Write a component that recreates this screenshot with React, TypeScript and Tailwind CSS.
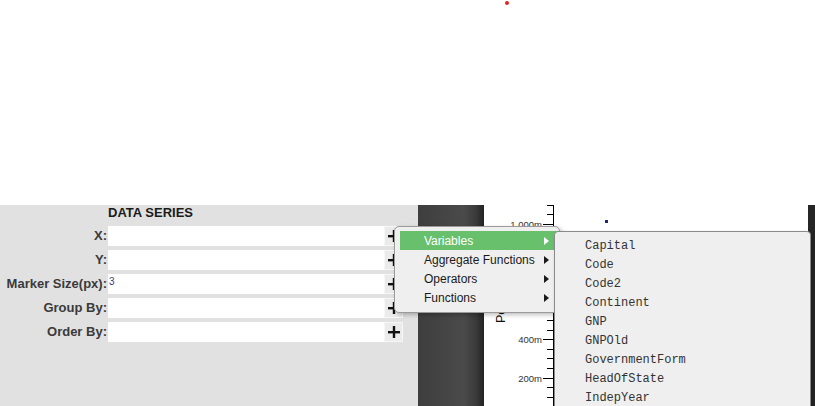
import React from "react";

const rows = [
  { label: "X:", value: "" },
  { label: "Y:", value: "" },
  { label: "Marker Size(px):", value: "3" },
  { label: "Group By:", value: "" },
  { label: "Order By:", value: "" },
];

const menuItems = ["Variables", "Aggregate Functions", "Operators", "Functions"];
const subItems = [
  "Capital",
  "Code",
  "Code2",
  "Continent",
  "GNP",
  "GNPOld",
  "GovernmentForm",
  "HeadOfState",
  "IndepYear",
];

function PlusIcon() {
  return (
    <svg width="12" height="12" viewBox="0 0 12 12">
      <rect x="0" y="5" width="12" height="2.4" fill="#111" />
      <rect x="4.8" y="0" width="2.4" height="12" fill="#111" />
    </svg>
  );
}

function Chart() {
  const ticks: { y: number; major: boolean; label?: string }[] = [];
  const labels: Record<number, string> = {
    0: "1,000m",
    12: "400m",
    16: "200m",
  };
  for (let i = -2; i <= 20; i++) {
    const y = 19 + i * 9.6;
    const major = i % 4 === 0;
    ticks.push({ y, major, label: labels[i] });
  }
  return (
    <svg width="324" height="201" viewBox="0 0 324 201" className="block">
      <line x1="69.5" y1="-2" x2="69.5" y2="201" stroke="#000" strokeWidth="1" />
      {ticks.map((t, i) => (
        <g key={i}>
          <line
            x1={t.major ? 59 : 63}
            y1={Math.round(t.y) + 0.5}
            x2={69.5}
            y2={Math.round(t.y) + 0.5}
            stroke="#000"
            strokeWidth="1"
          />
          {t.label && (
            <text
              x="58"
              y={Math.round(t.y) + 3.5}
              textAnchor="end"
              fontSize="9.5"
              fontFamily="'Liberation Sans', Arial, sans-serif"
              fill="#333"
            >
              {t.label}
            </text>
          )}
        </g>
      ))}
      <text
        transform="translate(21,118) rotate(-90)"
        fontSize="12.5"
        fontFamily="'Liberation Sans', Arial, sans-serif"
        fill="#111"
      >
        Population
      </text>
      <rect x="121" y="15" width="3" height="3" fill="#1f2a6e" />
    </svg>
  );
}

export default function App() {
  return (
    <div className="relative w-[815px] h-[406px] overflow-hidden bg-white font-['Liberation_Sans',Arial,sans-serif]">
      <div className="relative h-[205px]">
        <div className="absolute left-[505px] top-[1px] w-[4px] h-[4px] rounded-full bg-[#e02424]" />
      </div>
      <div className="flex h-[201px]">
        <div className="w-[418px] bg-[#e1e1e1]">
          <div className="flex h-[21px]">
            <div className="w-[108px]" />
            <div className="text-[13px] font-bold leading-[16px] text-[#1a1a1a]">DATA SERIES</div>
          </div>
          <div className="flex flex-col gap-[4px]">
            {rows.map((r) => (
              <div key={r.label} className="flex h-[20px]">
                <div className="w-[108px] pr-[1px] text-right text-[13px] font-bold leading-[20px] text-[#3a3a3a] whitespace-nowrap">
                  {r.label}
                </div>
                <div className="w-[276px] bg-white pl-[1px] text-[10px] leading-[16px] text-[#3b3b7a]">
                  {r.value}
                </div>
                <div className="flex w-[19px] items-center justify-center border border-[#f7f7f7] bg-[#ebebeb]">
                  <PlusIcon />
                </div>
              </div>
            ))}
          </div>
        </div>
        <div className="w-[66px] bg-[linear-gradient(to_right,#3e3e3e_0%,#4a4a4a_70%,#3a3a3a_88%,#222_100%)]" />
        <div className="w-[324px] bg-white">
          <Chart />
        </div>
        <div className="w-[7px] bg-[#262626]" />
      </div>

      {/* main context menu */}
      <div className="absolute left-[394px] top-[226px] w-[166px] h-[87px] rounded-[5px] border border-[#9a9a9a] bg-[#efefef] pt-[4px] pl-[5px] shadow-[2px_2px_4px_rgba(0,0,0,0.25)]">
        {menuItems.map((m, i) => (
          <div
            key={m}
            className={
              i === 0
                ? "flex h-[19px] items-center bg-[#68bf6c] pl-[24px] pr-[10px] text-[12px] text-white"
                : "flex h-[19px] items-center pl-[24px] pr-[10px] text-[12px] text-[#1a1a1a]"
            }
          >
            <span className="whitespace-nowrap">{m}</span>
            <span
              className={
                i === 0
                  ? "ml-auto shrink-0 h-0 w-0 border-y-[4px] border-y-transparent border-l-[5px] border-l-white"
                  : "ml-auto shrink-0 h-0 w-0 border-y-[4px] border-y-transparent border-l-[5px] border-l-[#1a1a1a]"
              }
            />
          </div>
        ))}
      </div>

      {/* submenu */}
      <div className="absolute left-[554px] top-[231px] w-[257px] h-[190px] rounded-t-[4px] border border-[#8a8a8a] bg-[#efefef] pt-[5px] shadow-[2px_2px_4px_rgba(0,0,0,0.2)]">
        {subItems.map((s) => (
          <div
            key={s}
            className="h-[19px] pl-[30px] text-[12px] leading-[19px] text-[#333] font-['Liberation_Mono','Courier_New',monospace]"
          >
            {s}
          </div>
        ))}
      </div>
    </div>
  );
}
